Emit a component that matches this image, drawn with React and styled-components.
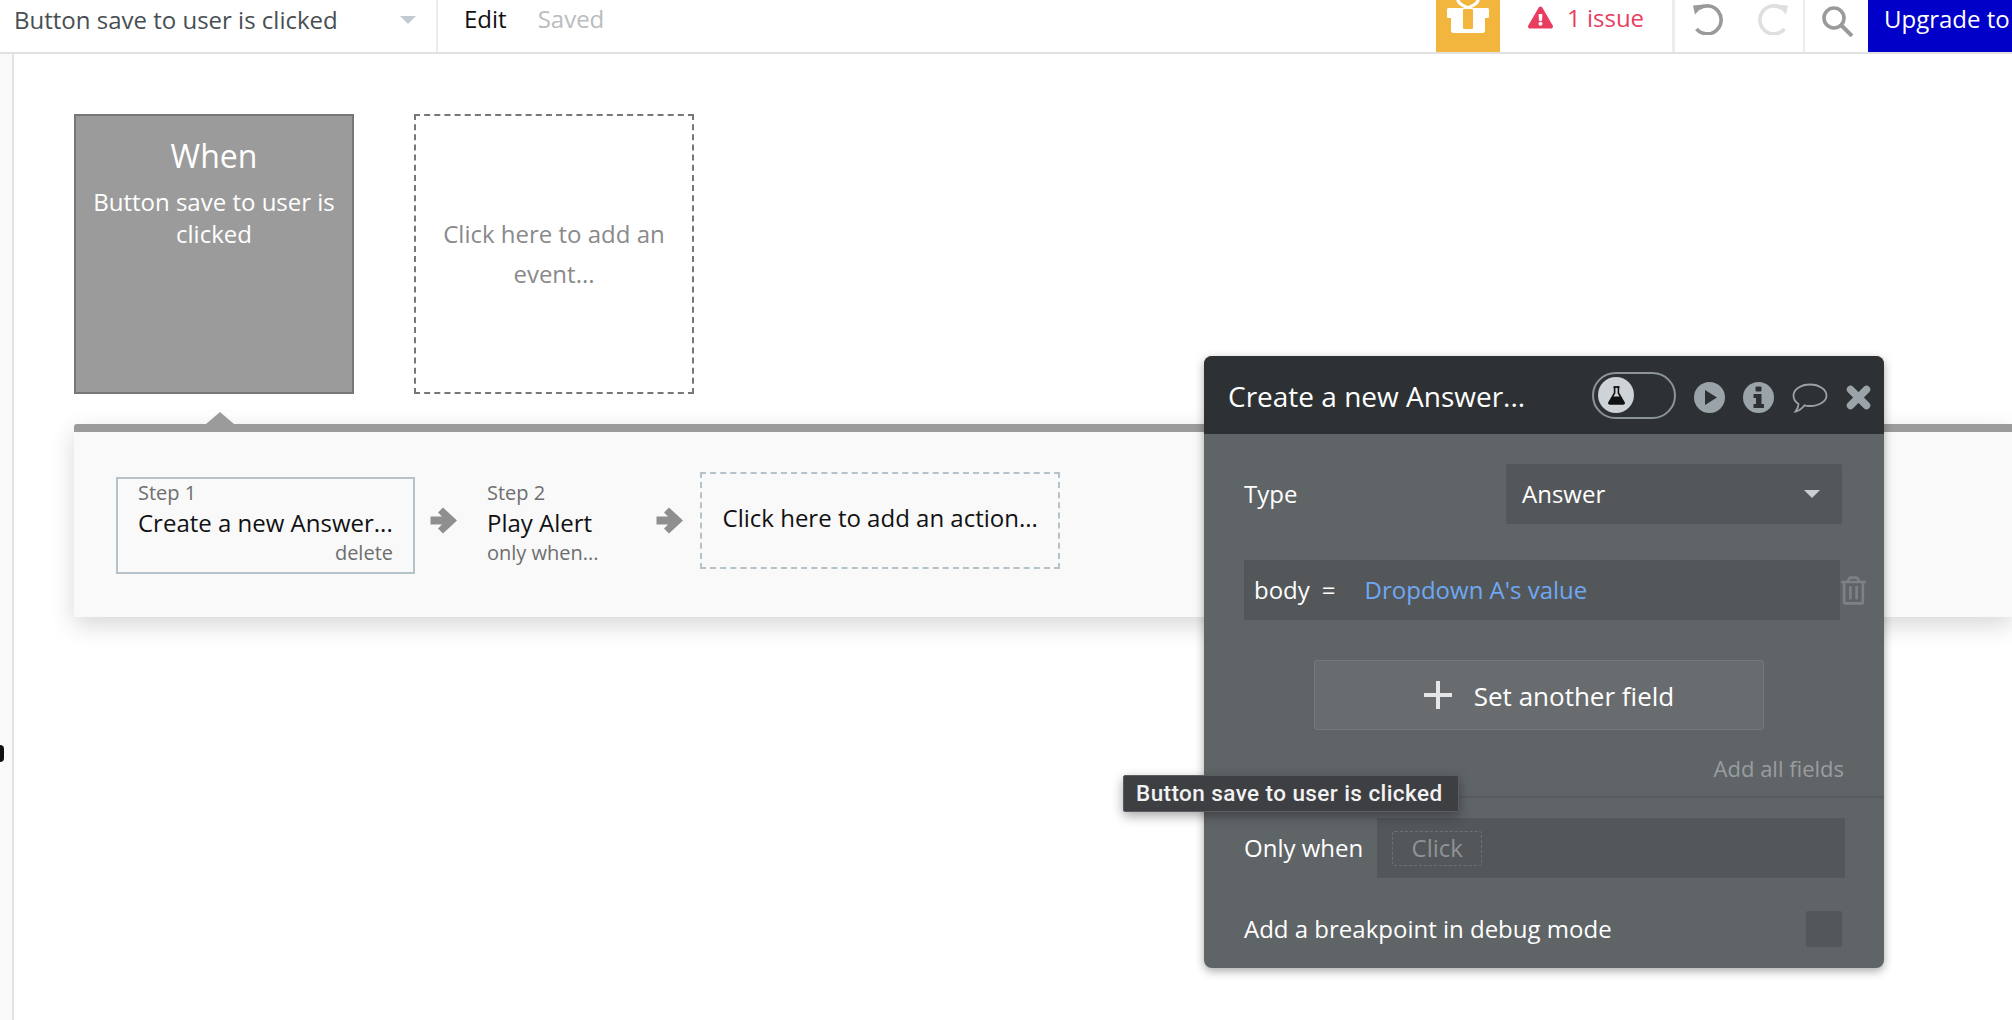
// App.jsx
import styled, { createGlobalStyle } from "styled-components";
import { FaExclamationTriangle, FaRegTrashAlt } from "react-icons/fa";

const GlobalStyle = createGlobalStyle`
  html, body {
    margin: 0;
    padding: 0;
    height: 1020px;
    overflow: hidden;
    background: #fff;
    font-family: "Open Sans", "Liberation Sans", sans-serif;
  }
  * { box-sizing: border-box; }
`;

const Page = styled.div`
  position: relative;
  width: 2012px;
  height: 1020px;
  overflow: hidden;
  display: flex;
  flex-direction: column;
`;

const TopBar = styled.header`
  height: 54px;
  flex: none;
  display: flex;
  align-items: stretch;
  border-bottom: 2px solid #e1e1e1;
  background: #fff;
`;

const EventPicker = styled.div`
  width: 438px;
  padding: 0 20px 13px 14px;
  display: flex;
  align-items: center;
  justify-content: space-between;
  border-right: 2px solid #e8edf0;
  font-size: 24px;
  color: #484f53;
`;

const Caret = styled.span`
  width: 0;
  height: 0;
  border-left: ${({ $size }) => $size}px solid transparent;
  border-right: ${({ $size }) => $size}px solid transparent;
  border-top: ${({ $size }) => $size}px solid ${({ $color }) => $color};
`;

const EditGroup = styled.div`
  display: flex;
  gap: 31px;
  padding: 0 0 15px 26px;
  align-items: center;
  font-size: 24px;
  flex: 1;
`;

const EditLink = styled.span`
  color: ${({ $muted }) => ($muted ? "#b9bdc0" : "#111")};
`;

const GiftButton = styled.div`
  width: 64px;
  background: #f2b63f;
  display: flex;
  justify-content: center;
`;

const IssueBox = styled.div`
  width: 175px;
  padding: 0 0 18px 28px;
  display: flex;
  align-items: center;
  gap: 14px;
  color: #e93d5f;
  font-size: 24px;
  border-right: 3px solid #e8edf0;
`;

const HistoryBox = styled.div`
  width: 130px;
  display: flex;
  padding: 3px 0 0 18px;
  gap: 31px;
  border-right: 2px solid #e8edf0;
`;

const SearchBox = styled.div`
  width: 63px;
  padding: 6px 0 0 17px;
`;

const UpgradeButton = styled.div`
  width: 144px;
  background: #0000c8;
  color: #fff;
  font-size: 24px;
  padding: 0 0 16px 16px;
  display: flex;
  align-items: center;
  white-space: nowrap;
  overflow: hidden;
`;

const Workspace = styled.div`
  flex: 1;
  display: flex;
  min-height: 0;
`;

const SideStrip = styled.div`
  position: relative;
  width: 14px;
  flex: none;
  background: #f9f9f9;
  border-right: 2px solid #e2e2e2;
`;

const SideHandle = styled.span`
  position: absolute;
  left: 0;
  top: 691px;
  width: 4px;
  height: 17px;
  background: #111;
  border-radius: 0 8px 8px 0;
`;

const Canvas = styled.main`
  flex: 1;
  padding: 60px 0 0 60px;
  min-width: 0;
`;

const EventRow = styled.div`
  display: flex;
  gap: 60px;
`;

const WhenCard = styled.div`
  width: 280px;
  height: 280px;
  background: #9b9b9b;
  border: 2px solid #777;
  color: #fff;
  text-align: center;
  padding: 18px 16px 0;
`;

const WhenTitle = styled.div`
  font-size: 32px;
  line-height: 44px;
  margin-bottom: 8px;
`;

const WhenText = styled.div`
  font-size: 24px;
  line-height: 31.5px;
`;

const AddEventCard = styled.div`
  width: 280px;
  height: 280px;
  border: 2px dashed #777;
  color: #8a8a8a;
  font-size: 24px;
  line-height: 40px;
  text-align: center;
  display: flex;
  align-items: center;
  justify-content: center;
  padding: 0 24px;
`;

const ActionsPanel = styled.section`
  position: relative;
  margin-top: 30px;
  height: 193px;
  background: #f9f9f9;
  border-top: 8px solid #9b9b9b;
  border-top-left-radius: 3px;
  box-shadow: 0 8px 24px rgba(0, 0, 0, 0.16);
  display: flex;
  align-items: center;
  padding: 0 0 8px 42px;
`;

const PanelPointer = styled.span`
  position: absolute;
  left: 132px;
  top: -20px;
  width: 0;
  height: 0;
  border-left: 14px solid transparent;
  border-right: 14px solid transparent;
  border-bottom: 12px solid #9b9b9b;
`;

const StepBox = styled.div`
  width: ${({ $selected }) => ($selected ? "299px" : "auto")};
  height: 97px;
  padding: 1px ${({ $selected }) => ($selected ? "20px" : "0")} 0;
  border: ${({ $selected }) => ($selected ? "2px solid #b5c2c9" : "2px solid transparent")};
  display: flex;
  flex-direction: column;
  margin-top: 9px;
`;

const StepLabel = styled.div`
  font-size: 20px;
  line-height: 25px;
  color: #6e6e6e;
`;

const StepName = styled.div`
  font-size: 24px;
  line-height: 35px;
  color: #111;
  white-space: nowrap;
`;

const StepNote = styled.div`
  font-size: 20px;
  line-height: 26px;
  color: #6e6e6e;
  text-align: ${({ $right }) => ($right ? "right" : "left")};
`;

const ArrowSvg = styled.svg`
  flex: none;
  width: 27px;
  height: 27px;
  margin: ${({ $gap }) => $gap};
`;

const AddActionBox = styled.div`
  width: 360px;
  height: 97px;
  border: 2px dashed #b5c2c9;
  font-size: 24px;
  color: #111;
  display: flex;
  align-items: center;
  padding: 0 0 6px 21px;
  white-space: nowrap;
`;

const EditorWindow = styled.aside`
  position: absolute;
  left: 1204px;
  top: 356px;
  width: 680px;
  height: 612px;
  border-radius: 8px;
  background: #5f6467;
  box-shadow: 0 3px 10px rgba(0, 0, 0, 0.35);
  color: #fff;
  font-size: 24px;
`;

const EditorHeader = styled.div`
  height: 78px;
  background: #2d3134;
  border-radius: 8px 8px 0 0;
  display: flex;
  align-items: center;
  padding: 0 13px 0 24px;
`;

const EditorTitle = styled.div`
  font-size: 28px;
  flex: 1;
  padding-top: 2px;
  white-space: nowrap;
`;

const ToggleTrack = styled.div`
  width: 84px;
  height: 47px;
  border: 2px solid #8b9599;
  border-radius: 24px;
  padding: 3.5px 4px;
  margin-right: 18px;
`;

const ToggleKnob = styled.div`
  width: 36px;
  height: 36px;
  border-radius: 50%;
  background: #cdd3d7;
  display: flex;
  align-items: center;
  justify-content: center;
`;

const HeaderIcons = styled.div`
  display: flex;
  align-items: center;
  gap: 18px;
  padding-top: 5px;
`;

const EditorBody = styled.div`
  padding: 30px 0 0;
`;

const FieldRow = styled.div`
  display: flex;
  align-items: center;
  padding: 0 42px 0 40px;
  margin-bottom: ${({ $mb }) => $mb || 0}px;
`;

const FieldLabel = styled.div`
  flex: ${({ $grow }) => ($grow ? 1 : "none")};
  padding-bottom: 2px;
`;

const SelectBox = styled.div`
  width: 336px;
  height: 60px;
  background: #53575a;
  border-radius: 2px;
  display: flex;
  align-items: center;
  justify-content: space-between;
  padding: 0 22px 0 16px;
`;

const BodyField = styled.div`
  position: relative;
  width: 596px;
  height: 60px;
  margin-left: 40px;
  background: #53575a;
  display: flex;
  align-items: center;
  padding: 0 0 2px 10px;
`;

const EqualsSign = styled.span`
  margin: 0 29px 0 12px;
`;

const DynamicValue = styled.span`
  color: #6ea8f2;
`;

const TrashIcon = styled(FaRegTrashAlt)`
  position: absolute;
  right: -26px;
  top: 16px;
  width: 25px;
  height: 29px;
  color: #7d8285;
`;

const AddFieldButton = styled.div`
  width: 450px;
  height: 70px;
  margin: 40px 0 0 110px;
  background: #686c6f;
  border: 1px solid #74787b;
  border-radius: 3px;
  display: flex;
  align-items: center;
  justify-content: center;
  gap: 22px;
  font-size: 26px;
  padding-left: 20px;
`;

const FieldText = styled.span`
  padding-top: 2px;
`;

const PlusIcon = styled.svg`
  width: 28px;
  height: 28px;
`;

const AddAllLink = styled.div`
  margin-top: 22px;
  padding-right: 40px;
  height: 32px;
  line-height: 32px;
  text-align: right;
  font-size: 22px;
  color: #999da0;
`;

const Divider = styled.div`
  height: 2px;
  margin: 12px 0 20px;
  background: #585c5f;
`;

const ConditionInput = styled.div`
  flex: none;
  width: 468px;
  height: 60px;
  background: #53575a;
  display: flex;
  align-items: center;
  padding-left: 15px;
  margin-left: 14px;
`;

const ClickChip = styled.div`
  width: 90px;
  height: 35px;
  border: 1px dashed #6d7174;
  border-radius: 3px;
  color: #8f9396;
  display: flex;
  align-items: center;
  justify-content: center;
`;

const Checkbox = styled.div`
  width: 36px;
  height: 36px;
  background: #53575a;
  border-radius: 2px;
`;

const Tooltip = styled.div`
  position: absolute;
  left: 1123px;
  top: 775px;
  width: 336px;
  height: 37px;
  background: #3e3f43;
  border: 1px solid #5c5d60;
  border-radius: 2px;
  box-shadow: 0 4px 12px rgba(0, 0, 0, 0.35);
  color: #f2f2f2;
  font-family: Roboto, "Liberation Sans", sans-serif;
  font-weight: 500;
  font-size: 22.5px;
  letter-spacing: 0.42px;
  line-height: 35px;
  padding-left: 12px;
  white-space: nowrap;
`;

const GiftIcon = () => (
  <svg width="42" height="34" viewBox="0 0 42 34">
    <path
      d="M21 8 C17 6 11 4 11 0 M21 8 C25 6 31 4 31 0"
      fill="none"
      stroke="#fff"
      strokeWidth="3.4"
    />
    <rect x="0" y="8" width="42" height="10" rx="1.5" fill="#fff" />
    <rect x="4" y="17" width="34" height="16" rx="2.5" fill="#fff" />
    <rect x="16" y="9" width="10" height="20" rx="1" fill="#f2b63f" />
  </svg>
);

const UndoIcon = ({ color, flip }) => (
  <svg width="32" height="32" viewBox="0 0 32 32" style={flip ? { transform: "scaleX(-1)" } : undefined}>
    <path d="M6 5.5 A14 14 0 1 1 3.5 26" fill="none" stroke={color} strokeWidth="3.6" />
    <path d="M0 2.5 L11.5 1.5 L2 11.5 Z" fill={color} />
  </svg>
);

const SearchIcon = () => (
  <svg width="32" height="31" viewBox="0 0 32 31">
    <circle cx="12" cy="12" r="10" fill="none" stroke="#9a9a9a" strokeWidth="3.6" />
    <path d="M19 19 L30 30" stroke="#9a9a9a" strokeWidth="4" />
  </svg>
);

const StepArrowIcon = ({ $gap }) => (
  <ArrowSvg $gap={$gap} viewBox="0 0 27 27">
    <path fill="#8f8f8f" d="M13 0.5 L27 13.5 L13 26.5 L8 21.5 L12 17.5 H0.5 V9.5 H12 L8 5.5 Z" />
  </ArrowSvg>
);

const FlaskIcon = () => (
  <svg width="17" height="19" viewBox="0 0 17 19">
    <path d="M5.5 1 H11.5" stroke="#111" strokeWidth="1.8" fill="none" />
    <path d="M6.6 1 V7 L1 16.5 Q0.5 18 2 18 H15 Q16.5 18 16 16.5 L10.4 7 V1" stroke="#111" strokeWidth="1.6" fill="none" />
    <path d="M4.6 10.5 H12.4 L16 16.5 Q16.5 18 15 18 H2 Q0.5 18 1 16.5 Z" fill="#111" />
  </svg>
);

const PlayIcon = () => (
  <svg width="31" height="31" viewBox="0 0 31 31">
    <circle cx="15.5" cy="15.5" r="15.5" fill="#9aa3a8" />
    <path d="M11 8 L23 15.5 L11 23 Z" fill="#2d3134" />
  </svg>
);

const InfoIcon = () => (
  <svg width="31" height="31" viewBox="0 0 31 31">
    <circle cx="15.5" cy="15.5" r="15.5" fill="#9aa3a8" />
    <rect x="12.5" y="4.5" width="6" height="5" rx="1" fill="#2d3134" />
    <path d="M10.5 12 H18.5 V22 H21 V26 H10.5 V22 H13 V16 H10.5 Z" fill="#2d3134" />
  </svg>
);

const CommentIcon = () => (
  <svg width="36" height="30" viewBox="0 0 36 30">
    <path
      d="M18 1.5 C27 1.5 34.5 6.5 34.5 12.5 C34.5 18.5 27 23 18 23 C16 23 14 22.8 12.5 22.3 C10.5 25 7 28 3.5 28.5 C5.5 26 6.5 23.5 6.5 21 C3.5 19 1.5 16 1.5 12.5 C1.5 6.5 9 1.5 18 1.5 Z"
      fill="none"
      stroke="#9aa3a8"
      strokeWidth="1.8"
    />
  </svg>
);

const CloseIcon = () => (
  <svg width="25" height="25" viewBox="0 0 25 25">
    <path d="M4.5 4.5 L20.5 20.5 M20.5 4.5 L4.5 20.5" stroke="#9aa3a8" strokeWidth="7.5" strokeLinecap="round" />
  </svg>
);

const App = () => (
  <>
    <GlobalStyle />
    <Page>
      <TopBar>
        <EventPicker>
          Button save to user is clicked
          <Caret $size={8} $color="#c2cbd1" />
        </EventPicker>
        <EditGroup>
          <EditLink>Edit</EditLink>
          <EditLink $muted>Saved</EditLink>
        </EditGroup>
        <GiftButton>
          <GiftIcon />
        </GiftButton>
        <IssueBox>
          <FaExclamationTriangle size={25} />
          1 issue
        </IssueBox>
        <HistoryBox>
          <UndoIcon color="#9a9a9a" />
          <UndoIcon color="#dfdfdf" flip />
        </HistoryBox>
        <SearchBox>
          <SearchIcon />
        </SearchBox>
        <UpgradeButton>Upgrade to</UpgradeButton>
      </TopBar>

      <Workspace>
        <SideStrip>
          <SideHandle />
        </SideStrip>
        <Canvas>
          <EventRow>
            <WhenCard>
              <WhenTitle>When</WhenTitle>
              <WhenText>Button save to user is clicked</WhenText>
            </WhenCard>
            <AddEventCard>Click here to add an event...</AddEventCard>
          </EventRow>
          <ActionsPanel>
            <PanelPointer />
            <StepBox $selected>
              <StepLabel>Step 1</StepLabel>
              <StepName>Create a new Answer...</StepName>
              <StepNote $right>delete</StepNote>
            </StepBox>
            <StepArrowIcon $gap="0 28px 0 15px" />
            <StepBox>
              <StepLabel>Step 2</StepLabel>
              <StepName>Play Alert</StepName>
              <StepNote>only when...</StepNote>
            </StepBox>
            <StepArrowIcon $gap="0 17px 0 55px" />
            <AddActionBox>Click here to add an action...</AddActionBox>
          </ActionsPanel>
        </Canvas>
      </Workspace>

      <EditorWindow>
        <EditorHeader>
          <EditorTitle>Create a new Answer...</EditorTitle>
          <ToggleTrack>
            <ToggleKnob>
              <FlaskIcon />
            </ToggleKnob>
          </ToggleTrack>
          <HeaderIcons>
            <PlayIcon />
            <InfoIcon />
            <CommentIcon />
            <CloseIcon />
          </HeaderIcons>
        </EditorHeader>
        <EditorBody>
          <FieldRow $mb={36}>
            <FieldLabel $grow>Type</FieldLabel>
            <SelectBox>
              <FieldLabel>Answer</FieldLabel>
              <Caret $size={8} $color="#c9d0d4" />
            </SelectBox>
          </FieldRow>
          <BodyField>
            body
            <EqualsSign>=</EqualsSign>
            <DynamicValue>Dropdown A's value</DynamicValue>
            <TrashIcon />
          </BodyField>
          <AddFieldButton>
            <PlusIcon viewBox="0 0 28 28">
              <path fill="#e4e6e7" d="M12 0h4v12h12v4H16v12h-4V16H0v-4h12z" />
            </PlusIcon>
            <FieldText>Set another field</FieldText>
          </AddFieldButton>
          <AddAllLink>Add all fields</AddAllLink>
          <Divider />
          <FieldRow $mb={33}>
            <FieldLabel>Only when</FieldLabel>
            <ConditionInput>
              <ClickChip>
                <FieldLabel>Click</FieldLabel>
              </ClickChip>
            </ConditionInput>
          </FieldRow>
          <FieldRow>
            <FieldLabel $grow>Add a breakpoint in debug mode</FieldLabel>
            <Checkbox />
          </FieldRow>
        </EditorBody>
      </EditorWindow>

      <Tooltip>Button save to user is clicked</Tooltip>
    </Page>
  </>
);

export default App;
